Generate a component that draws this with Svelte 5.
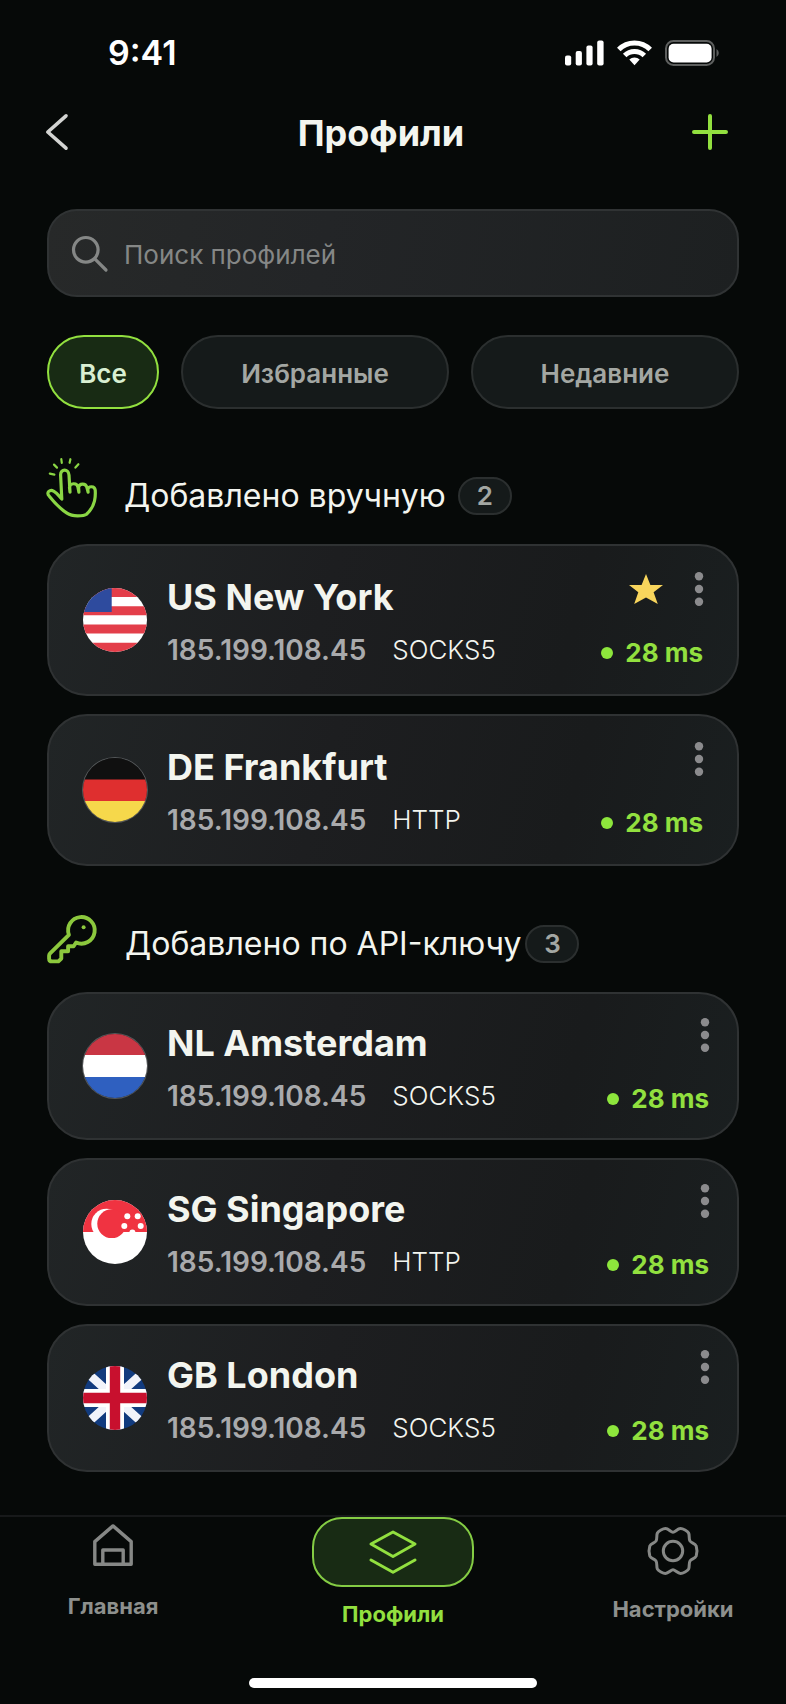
<script>
  const filters = ["Все", "Избранные", "Недавние"];

  const groups = [
    {
      icon: "hand",
      title: "Добавлено вручную",
      items: [
        { flag: "us", name: "US New York", ip: "185.199.108.45", protocol: "SOCKS5", ping: 28, starred: true },
        { flag: "de", name: "DE Frankfurt", ip: "185.199.108.45", protocol: "HTTP", ping: 28 },
      ],
    },
    {
      icon: "key",
      title: "Добавлено по API-ключу",
      compact: true,
      items: [
        { flag: "nl", name: "NL Amsterdam", ip: "185.199.108.45", protocol: "SOCKS5", ping: 28 },
        { flag: "sg", name: "SG Singapore", ip: "185.199.108.45", protocol: "HTTP", ping: 28 },
        { flag: "gb", name: "GB London", ip: "185.199.108.45", protocol: "SOCKS5", ping: 28 },
      ],
    },
  ];

  let active = $state("Все");
  let query = $state("");
</script>

{#snippet flagIcon(code)}
  <svg class="flag" class:ringed={code === "de" || code === "nl"} viewBox="0 0 64 64" aria-hidden="true">
    {#if code === "us"}
      <rect width="64" height="64" fill="#fff" />
      <path d="M0 0h64v9H0zM0 18.2h64v9H0zM0 36.4h64v9H0zM0 54.8h64V64H0z" fill="#e33e4a" />
      <rect width="28.7" height="24" fill="#2e4b9e" />
    {:else if code === "de"}
      <rect width="64" height="22" fill="#101010" />
      <rect y="21.5" width="64" height="22" fill="#df2f2f" />
      <rect y="43" width="64" height="21" fill="#f6d84b" />
    {:else if code === "nl"}
      <rect width="64" height="22" fill="#c93644" />
      <rect y="21" width="64" height="22" fill="#fff" />
      <rect y="43" width="64" height="21" fill="#2f60c0" />
    {:else if code === "sg"}
      <rect width="64" height="64" fill="#fff" />
      <rect width="64" height="32" fill="#f03341" />
      <circle cx="23.5" cy="24" r="15.2" fill="#fff" />
      <circle cx="28.7" cy="23.7" r="14.4" fill="#f03341" />
      <g fill="#fff">
        <circle cx="44.3" cy="16.2" r="3" />
        <circle cx="54.7" cy="16.2" r="3" />
        <circle cx="41.3" cy="26" r="3" />
        <circle cx="57.7" cy="26" r="3" />
        <circle cx="49.4" cy="32.5" r="3" />
      </g>
    {:else}
      <rect width="64" height="64" fill="#123b7e" />
      <path d="M0 3l64 58M64 3L0 61" stroke="#f1f3fa" stroke-width="8.5" />
      <path d="M32 0v64M0 32h64" stroke="#fff" stroke-width="18" />
      <path d="M32 0v64M0 32h64" stroke="#c8102e" stroke-width="10.4" />
    {/if}
  </svg>
{/snippet}

<div class="page">
  <div class="status">
    <span class="time">9:41</span>
    <div class="status-icons">
      <svg width="39" height="26" viewBox="0 0 39 26" fill="#fff" aria-hidden="true">
        <rect x="0" y="15.5" width="6.2" height="10" rx="2" />
        <rect x="10.7" y="11" width="6.2" height="14.5" rx="2" />
        <rect x="21.4" y="5.5" width="6.2" height="20" rx="2" />
        <rect x="32.2" y="0.5" width="6.4" height="25" rx="2" />
      </svg>
      <svg width="35" height="26" viewBox="0 0 35 26" fill="none" stroke="#fff" aria-hidden="true">
        <path d="M1.8 9.6a22.2 22.2 0 0 1 31.4 0" stroke-width="5" />
        <path d="M7.7 15.5a13.9 13.9 0 0 1 19.6 0" stroke-width="5" />
        <path d="M17.5 25.2l-5.2-5.6a7.4 7.4 0 0 1 10.4 0z" fill="#fff" stroke="none" />
      </svg>
      <svg width="55" height="26" viewBox="0 0 55 26" aria-hidden="true">
        <rect x="1" y="1" width="48" height="24" rx="7.5" fill="none" stroke="#5d5f5e" stroke-width="2" />
        <rect x="3.6" y="3.8" width="43" height="18.6" rx="5" fill="#fff" />
        <path d="M51.5 9a4.6 4.6 0 0 1 0 8z" fill="#5d5f5e" />
      </svg>
    </div>
  </div>

  <header>
    <button class="icon-btn" aria-label="Назад">
      <svg width="36" height="36" viewBox="0 0 36 36" fill="none" stroke="#d3d4d2" stroke-width="3.6" stroke-linecap="round" stroke-linejoin="round">
        <path d="M20 1.8L1.8 18 20 34.2" />
      </svg>
    </button>
    <h1>Профили</h1>
    <button class="icon-btn" aria-label="Добавить профиль">
      <svg width="36" height="36" viewBox="0 0 36 36" fill="none" stroke="#92e03f" stroke-width="4" stroke-linecap="round">
        <path d="M18 2v32M2 18h32" />
      </svg>
    </button>
  </header>

  <main>
    <label class="search">
      <svg width="36" height="36" viewBox="0 0 36 36" fill="none" stroke="#858786" stroke-width="3.2" stroke-linecap="round" aria-hidden="true">
        <circle cx="13.8" cy="13.8" r="12.3" />
        <path d="M22.8 22.8L34 34" />
      </svg>
      <input type="search" placeholder="Поиск профилей" aria-label="Поиск профилей" bind:value={query} />
    </label>

    <div class="filters">
      {#each filters as filter}
        <button class="chip" class:active={active === filter} onclick={() => (active = filter)}>{filter}</button>
      {/each}
    </div>

    {#each groups as group}
      <section class:compact={group.compact}>
        <div class="group-head">
          {#if group.icon === "hand"}
            <svg width="50" height="60" viewBox="0 0 50 60" fill="none" stroke="#8ad644" stroke-width="3.2" stroke-linecap="round" stroke-linejoin="round" aria-hidden="true">
              <path d="M14.3 1.2l.5 3.6M23.4 1.2l-.8 3.6M7 6.6l3 3M31.4 6.2l-3 3.4M2.8 15.6l4.6 1" stroke-width="2.2" />
              <path d="M14.8 41L13.6 17c-.2-6.4 8-6.6 8.4 0l1 17.2-.5-4.7c.3-4.8 7.6-5 8.4-.5l1 5.2-.3-5c.7-4 7-4.4 8.2 0l1.3 5-.3-2.8c.8-3.6 6.8-3.6 7.4.6.3 4 .2 7.2-.7 11-1.2 5-4 9.6-8 13.2-1.3 1-5.2 1.6-8.9 1.6-4.4 0-7.6-.6-10.6-2.6-7.8-5.1-11.2-8.900-17.700-17C-1.600 34.300 3.400 31 6.600 33.200c3.500 1.800 5.600 5 8.200 7.800z" />
            </svg>
          {:else}
            <svg width="50" height="51" viewBox="0 0 50 51" fill="none" stroke="#8cc83d" stroke-width="3.9" stroke-linejoin="round" aria-hidden="true">
              <path d="M21.9 19.8A13.3 13.3 0 1 1 29.1 27.5L26.6 31.3h-5.5v4.9h-6.8v7.4l-2.9 2.8H5.1c-2 0-3-1-3-3v-2.6c0-1 .3-1.8 1-2.5z" />
              <circle cx="36.6" cy="12.2" r="2" fill="#8cc83d" stroke="none" />
            </svg>
          {/if}
          <div class="group-title">
            <h2>{group.title}</h2>
            <span class="count">{group.items.length}</span>
          </div>
        </div>

        <ul>
          {#each group.items as item}
            <li class="card">
              {@render flagIcon(item.flag)}
              <div class="info">
                <h3>{item.name}</h3>
                <p>
                  <span class="ip">{item.ip}</span>
                  <span class="protocol">{item.protocol}</span>
                </p>
              </div>
              <div class="side">
                <div class="actions">
                  {#if item.starred}
                    <svg width="34" height="30" viewBox="0 0 34 30" fill="#f8d55c" role="img" aria-label="В избранном">
                      <path d="M17 0l4.4 11H34l-9.4 7.2L28.8 30 17 23.4 5.2 30l4.1-11.8L0 11h12.6z" />
                    </svg>
                  {/if}
                  <button class="more" aria-label="Действия: {item.name}">
                    <svg width="8" height="34" viewBox="0 0 8 34" fill="#8b8b8d">
                      <circle cx="4" cy="4.3" r="4.2" />
                      <circle cx="4" cy="17" r="4.2" />
                      <circle cx="4" cy="29.7" r="4.2" />
                    </svg>
                  </button>
                </div>
                <span class="ping">{item.ping} ms</span>
              </div>
            </li>
          {/each}
        </ul>
      </section>
    {/each}
  </main>

  <nav>
    <a class="tab home" href="#home">
      <svg width="40" height="42" viewBox="0 0 40 42" fill="none" stroke="#868886" stroke-width="3.4" stroke-linejoin="round" aria-hidden="true">
        <path d="M1.8 17.6L20 1.9l18.2 15.7v22.6H1.8zM9.8 40V26h20.4v14" />
      </svg>
      Главная
    </a>
    <a class="tab current" href="#profiles" aria-current="page">
      <span class="pill">
        <svg width="48" height="44" viewBox="0 0 48 44" fill="none" stroke="#92e03f" stroke-width="3" stroke-linecap="round" stroke-linejoin="round" aria-hidden="true">
          <path d="M24 2l22 12-22 12.500L2 14zM2 30l22 12.300L46 30" />
        </svg>
      </span>
      Профили
    </a>
    <a class="tab settings" href="#settings">
      <svg width="50" height="48" viewBox="0 0 50 48" fill="none" stroke="#868886" stroke-width="3" aria-hidden="true">
        <circle cx="25" cy="24" r="9.7" />
        <path d="M25 5.2C27 5.2 29.5 1.6 32.5 1.6C35 1.6 39.5 4 40.6 6C41.8 8.5 40.5 11.5 42 14C43.5 16.2 47 16.2 48.2 19C49 21.5 49 26.5 48.2 29C47 31.8 43.5 31.8 42 34C40.5 36.5 41.8 39.5 40.6 42C39.5 44 35 46.4 32.5 46.4C29.5 46.4 27 42.8 25 42.8C23 42.8 20.5 46.4 17.5 46.4C15 46.4 10.5 44 9.4 42C8.2 39.5 9.5 36.5 8 34C6.5 31.8 3 31.8 1.8 29C1 26.5 1 21.5 1.8 19C3 16.2 6.5 16.2 8 14C9.5 11.5 8.2 8.5 9.4 6C10.5 4 15 1.6 17.5 1.6C20.5 1.6 23 5.2 25 5.2Z" />
      </svg>
      Настройки
    </a>
  </nav>
  <div class="home-indicator"></div>
</div>

<style>
  :global(body) {
    margin: 0;
    background: #060908;
  }

  .page {
    box-sizing: border-box;
    min-height: 100vh;
    padding-bottom: 16px;
    display: flex;
    flex-direction: column;
    font-family: Inter, "Liberation Sans", sans-serif;
    color: #f3f5ef;
  }

  h1, h2, h3, p, ul {
    margin: 0;
    padding: 0;
  }

  svg {
    display: block;
    flex: none;
    overflow: visible;
  }

  button {
    font: inherit;
    color: inherit;
    padding: 0;
    border: 0;
    background: none;
    cursor: pointer;
  }

  .status {
    display: flex;
    justify-content: space-between;
    align-items: center;
    padding: 32px 66px 0 108px;
    color: #fff;
  }
  .time {
    font-size: 34px;
    line-height: 42px;
    font-weight: 600;
  }
  .status-icons {
    display: flex;
    gap: 13px;
  }

  header {
    display: flex;
    justify-content: space-between;
    align-items: center;
    margin-top: 28px;
    padding: 0 58px 0 46px;
    height: 60px;
  }
  h1 {
    flex: 1;
    margin-right: 12px;
    padding-top: 2px;
    text-align: center;
    font-size: 36px;
    line-height: 44px;
    font-weight: 700;
  }

  main {
    padding: 47px 47px 43px;
  }

  .search {
    box-sizing: border-box;
    height: 88px;
    padding: 2px 24px 0 23px;
    display: flex;
    align-items: center;
    gap: 16px;
    border: 2px solid #303334;
    border-radius: 30px;
    background: linear-gradient(100deg, #272929, #232527 40%, #1d2021);
  }
  .search input {
    flex: 1;
    min-width: 0;
    padding: 2px 0 0;
    border: 0;
    outline: 0;
    background: none;
    font-family: inherit;
    font-size: 26px;
    line-height: 34px;
    color: #f3f5ef;
  }
  .search input::placeholder {
    color: #858786;
    opacity: 1;
  }

  .filters {
    display: flex;
    gap: 22px;
    margin-top: 38px;
  }
  .chip {
    box-sizing: border-box;
    flex: 1;
    height: 74px;
    padding-top: 2px;
    border: 2px solid #2b2f2f;
    border-radius: 37px;
    background: #151a1a;
    color: #a3a7a3;
    font-size: 26px;
    font-weight: 600;
  }
  .chip:first-child {
    flex: 0 0 112px;
  }
  .chip.active {
    border-color: #92e03f;
    background: #182b14;
    color: #d9efd2;
  }

  section {
    margin-top: 49px;
  }
  .group-head {
    display: flex;
    align-items: flex-end;
    gap: 27px;
    margin-bottom: 26px;
  }
  .group-title {
    display: flex;
    align-items: center;
    gap: 12px;
    height: 44px;
  }
  .compact .group-head {
    gap: 28px;
  }
  .compact .group-title {
    gap: 4px;
  }
  h2 {
    font-size: 32px;
    line-height: 44px;
    font-weight: 400;
  }
  .count {
    box-sizing: border-box;
    width: 54px;
    height: 38px;
    border: 2px solid #2b2f2f;
    border-radius: 19px;
    background: #151a1a;
    color: #a3a7a3;
    font-size: 26px;
    line-height: 34px;
    font-weight: 600;
    text-align: center;
  }

  ul {
    list-style: none;
    display: flex;
    flex-direction: column;
    gap: 18px;
  }
  .card {
    box-sizing: border-box;
    min-height: 152px;
    padding: 0 34px;
    display: flex;
    align-items: center;
    gap: 20px;
    border: 2px solid #2f3233;
    border-radius: 40px;
    background: linear-gradient(105deg, #212526, #1d1e20 40%, #191b1c 75%, #1a1f20);
  }
  .compact .card {
    min-height: 148px;
    padding-right: 28px;
  }
  .flag {
    width: 64px;
    height: 64px;
    border-radius: 50%;
    overflow: hidden;
  }
  .ringed {
    box-shadow: 0 0 0 1px #55585a;
  }
  .info {
    flex: 1;
    padding-top: 2px;
  }
  h3 {
    font-size: 36px;
    line-height: 44px;
    font-weight: 700;
  }
  .info p {
    display: flex;
    align-items: center;
    gap: 26px;
    margin-top: 14px;
    line-height: 34px;
  }
  .ip {
    font-size: 28px;
    font-weight: 600;
    color: #a9aaac;
  }
  .protocol {
    font-size: 26px;
    font-weight: 300;
  }
  .side {
    display: flex;
    flex-direction: column;
    align-items: flex-end;
    gap: 32px;
  }
  .actions {
    display: flex;
    align-items: center;
    gap: 32px;
  }
  .ping {
    display: flex;
    align-items: center;
    gap: 12px;
    font-size: 26px;
    line-height: 30px;
    font-weight: 700;
    color: #92e03f;
  }
  .ping::before {
    content: "";
    width: 12px;
    height: 12px;
    border-radius: 50%;
    background: #8de63c;
  }

  nav {
    display: flex;
    justify-content: space-between;
    align-items: flex-start;
    padding: 0 32px;
    border-top: 2px solid #17191a;
  }
  .tab {
    width: 162px;
    display: flex;
    flex-direction: column;
    align-items: center;
    font-size: 22px;
    line-height: 26px;
    font-weight: 700;
    color: #8d908d;
    text-decoration: none;
  }
  .home {
    padding-top: 7px;
    gap: 27px;
  }
  .settings {
    padding-top: 10px;
    gap: 21px;
  }
  .current {
    gap: 14px;
    color: #92e03f;
  }
  .pill {
    box-sizing: border-box;
    width: 100%;
    height: 70px;
    display: flex;
    align-items: center;
    justify-content: center;
    border: 2px solid #84cc44;
    border-radius: 30px;
    background: #182b14;
  }

  .home-indicator {
    align-self: center;
    width: 288px;
    height: 10px;
    margin-top: auto;
    border-radius: 5px;
    background: #fff;
  }
</style>
